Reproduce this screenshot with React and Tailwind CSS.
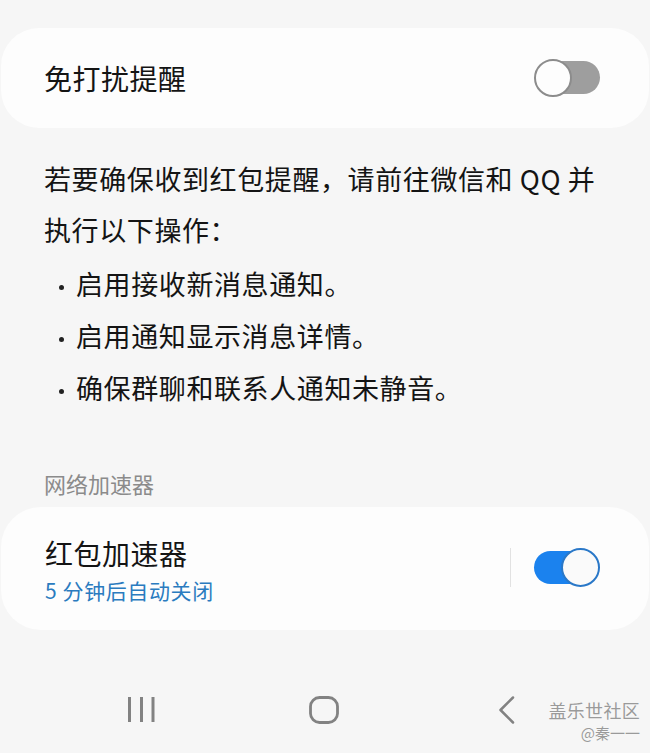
import React from 'react';

const cjk = { fontFamily: '"Noto Sans CJK SC", "Noto Sans", sans-serif' };

const Toggle = ({ on = false }) => {
  if (on) {
    return (
      <div className="relative w-[66px] h-[39px] shrink-0">
        <div className="absolute left-0 top-[3px] w-[56px] h-[33px] rounded-full bg-[#1b82ee]" />
        <div className="absolute right-0 top-0 w-[39px] h-[39px] rounded-full bg-[#fafafa] border-2 border-[#2a78c8]" />
      </div>
    );
  }
  return (
    <div className="relative w-[66px] h-[38px] shrink-0">
      <div className="absolute right-0 top-[2px] w-[54px] h-[33px] rounded-full bg-[#9e9e9e]" />
      <div className="absolute left-0 top-0 w-[38px] h-[38px] rounded-full bg-[#fdfdfd] border-2 border-[#8c8c8c]" />
    </div>
  );
};

const bullets = [
  '启用接收新消息通知。',
  '启用通知显示消息详情。',
  '确保群聊和联系人通知未静音。',
];

export default function App() {
  return (
    <div
      className="relative w-[650px] h-[753px] bg-[#f6f6f6] flex flex-col pt-[28px] overflow-hidden text-[#141414]"
      style={cjk}
    >
      {/* 免打扰提醒 */}
      <div className="mx-[1px] h-[100px] rounded-[38px] bg-[#fdfdfd] flex items-center justify-between pl-[43px] pr-[49px]">
        <span className="text-[28px] leading-[36px] tracking-[0.5px]">免打扰提醒</span>
        <Toggle />
      </div>

      {/* 说明 */}
      <div className="px-[44px] pt-[25px] text-[27px] tracking-[0.6px]">
        <p className="leading-[51px]">若要确保收到红包提醒，请前往微信和 QQ 并执行以下操作：</p>
        <ul className="mt-[3px]">
          {bullets.map((b) => (
            <li key={b} className="flex items-center leading-[52px]">
              <span className="w-[32px] shrink-0 flex">
                <span className="ml-[15px] mt-[6px] w-[5px] h-[5px] rounded-full bg-[#222]" />
              </span>
              <span>{b}</span>
            </li>
          ))}
        </ul>
      </div>

      {/* 网络加速器 */}
      <div className="mt-[55px] px-[44px] text-[22px] leading-[28px] text-[#8b8b8b]">网络加速器</div>

      <div className="mt-[10px] mx-[1px] h-[123px] rounded-[40px] bg-[#fdfdfd] flex justify-between pl-[44px] pr-[49px]">
        <div className="pt-[28px] flex flex-col">
          <span className="text-[28px] leading-[36px] tracking-[0.5px]">红包加速器</span>
          <span className="text-[21px] leading-[38px] tracking-[0.6px] text-[#2a7bbf]">5 分钟后自动关闭</span>
        </div>
        <div className="self-center flex items-center gap-[23px] mt-[-2px]">
          <div className="w-[1px] h-[39px] bg-[#e2e2e2]" />
          <Toggle on />
        </div>
      </div>

      {/* 导航栏 */}
      <div className="mt-[66px] flex items-start pl-[128px]">
        <svg width="27" height="27" viewBox="0 0 27 27" fill="none" stroke="#828282" strokeWidth="3">
          <line x1="1.5" y1="1" x2="1.5" y2="26" />
          <line x1="13.5" y1="1" x2="13.5" y2="26" />
          <line x1="25" y1="1" x2="25" y2="26" />
        </svg>
        <svg className="ml-[154px]" width="30" height="28" viewBox="0 0 30 28" fill="none" stroke="#828282" strokeWidth="2.8">
          <rect x="1.5" y="1.5" width="27" height="25" rx="9" />
        </svg>
        <svg className="ml-[159px]" width="17" height="28" viewBox="0 0 17 28" fill="none" stroke="#828282" strokeWidth="2.5" strokeLinecap="round" strokeLinejoin="round">
          <polyline points="15,1.5 2.5,14 15,26.5" />
        </svg>
      </div>

      {/* 水印 */}
      <div
        className="absolute right-[10px] bottom-[10px] flex flex-col items-end text-[#9a9a9a]"
        style={{ textShadow: '0 0 1px #ffffff' }}
      >
        <span className="text-[18px] leading-[22px] tracking-[0.3px]">盖乐世社区</span>
        <span className="text-[15px] leading-[20px] mt-[2px]">@秦一一</span>
      </div>
    </div>
  );
}
